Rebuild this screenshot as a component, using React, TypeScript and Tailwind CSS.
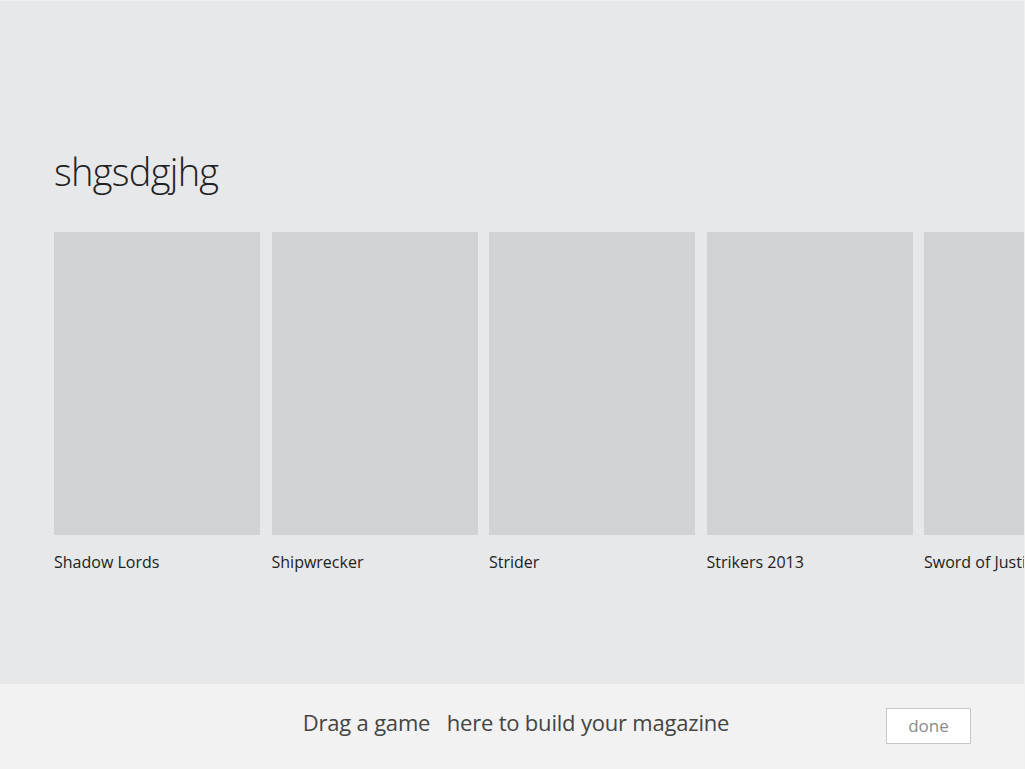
import React from "react";

const games = ["Shadow Lords", "Shipwrecker", "Strider", "Strikers 2013", "Sword of Justice"];

export default function App() {
  return (
    <div
      className="w-[1025px] h-[769px] overflow-hidden flex flex-col bg-[#e7e8ea] border-t border-r border-[#f0f0f1]"
      style={{ fontFamily: '"Open Sans", "Liberation Sans", sans-serif' }}
    >
      <div className="h-[683px] flex flex-col pl-[54px] overflow-hidden">
        <h1 className="mt-[146px] text-[38px] leading-[48px] font-light text-[#222] tracking-[-0.7px]">shgsdgjhg</h1>
        <div className="mt-[37px] flex gap-[11.5px] w-max">
          {games.map((g) => (
            <div key={g} className="w-[206px] flex flex-col">
              <div className="h-[303px] bg-[#d1d2d4]" />
              <div className="mt-[16px] text-[16px] leading-[22px] font-medium text-[#222] whitespace-nowrap">{g}</div>
            </div>
          ))}
        </div>
      </div>
      <div className="flex-1 bg-[#f2f2f2] relative flex items-center justify-center">
        <div className="text-[22px] text-[#444] tracking-[-0.2px] pl-[8px] pb-[8px] whitespace-pre">Drag a game   here to build your magazine</div>
        <button className="absolute left-[886px] top-[24px] w-[85px] h-[36px] bg-white border border-[#c8c8c8] text-[17px] text-[#8a8a8a]">
          done
        </button>
      </div>
    </div>
  );
}
